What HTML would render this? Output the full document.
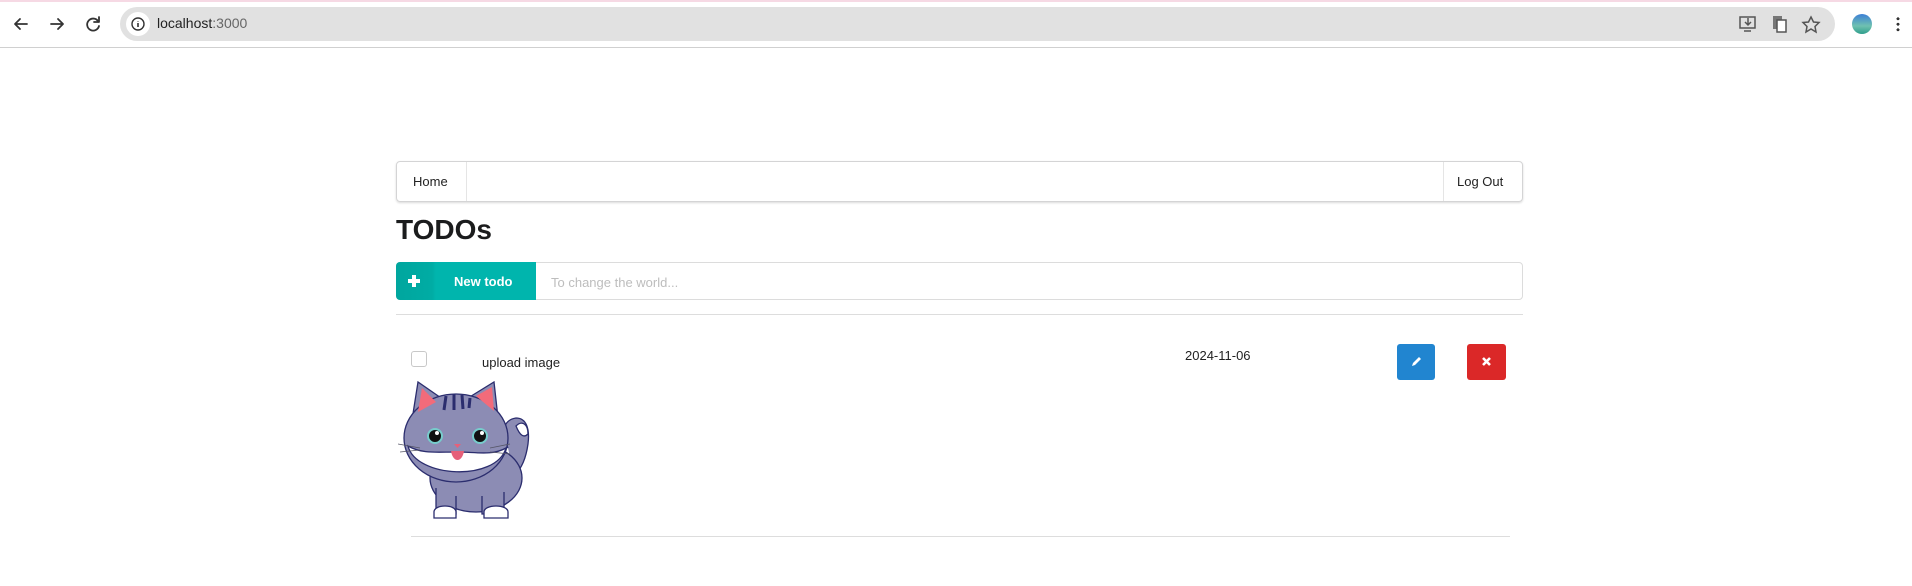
<!DOCTYPE html>
<html><head><style>
*{margin:0;padding:0;box-sizing:border-box}
body{width:1912px;height:586px;background:#fff;font-family:"Liberation Sans",sans-serif;position:relative;overflow:hidden;color:#222}
.a{position:absolute}
</style></head><body>
<div class="a" style="left:0;top:0;width:1912px;height:2px;background:#f6d9e4"></div>
<div class="a" style="left:0;top:47px;width:1912px;height:1px;background:#d0d0d0"></div>
<svg class="a" style="left:0;top:0" width="120" height="48">
<g stroke="#333" stroke-width="1.8" fill="none" stroke-linecap="round" stroke-linejoin="round">
<path d="M27 24H15M20 19l-5 5 5 5"/>
<path d="M51 24h12M58 19l5 5-5 5"/>
<path d="M98 21a6 6 0 1 0 1 5"/><path d="M99 17v5h-5"/>
</g></svg>
<div class="a" style="left:120px;top:7px;width:1715px;height:34px;background:#e1e1e1;border-radius:17px"></div>
<div class="a" style="left:126px;top:12px;width:24px;height:24px;background:#fff;border-radius:12px"></div>
<svg class="a" style="left:130px;top:16px" width="16" height="16"><circle cx="8" cy="8" r="6" fill="none" stroke="#333" stroke-width="1.4"/><path d="M8 7v4M8 5v.5" stroke="#333" stroke-width="1.6"/></svg>
<div class="a" style="left:157px;top:15px;font-size:14px;color:#222">localhost<span style="color:#666">:3000</span></div>
<svg class="a" style="left:1736px;top:12px" width="90" height="24" fill="none" stroke="#555" stroke-width="1.5">
<rect x="4" y="5" width="15" height="11"/><path d="M8 19h7M12 6v6M9 10l3 3 3-3"/>
<rect x="37" y="4" width="9" height="13" fill="#777" stroke="none"/><rect x="41" y="8" width="9" height="12" fill="#fff"/>
<path d="M75 5l2.5 5 5.5.5-4 4 1 5.5-5-3-5 3 1-5.5-4-4 5.5-.5z"/></svg>
<div class="a" style="left:1852px;top:14px;width:20px;height:20px;border-radius:10px;background:linear-gradient(#3d7fd6,#6fc1b0 60%,#2f9e8c)"></div>
<div class="a" style="left:1896px;top:16px;width:4px;height:16px;background:radial-gradient(circle,#333 1.4px,transparent 1.6px) 0 0/4px 5.5px"></div>

<div class="a" style="left:396px;top:161px;width:1127px;height:41px;border:1px solid #d4d4d5;border-radius:4px;box-shadow:0 1px 2px rgba(0,0,0,.15)"></div>
<div class="a" style="left:466px;top:162px;width:1px;height:39px;background:#e5e5e5"></div>
<div class="a" style="left:1443px;top:162px;width:1px;height:39px;background:#e5e5e5"></div>
<div class="a" style="left:413px;top:174px;font-size:13px">Home</div>
<div class="a" style="left:1457px;top:174px;font-size:13px">Log Out</div>
<div class="a" style="left:396px;top:214px;font-size:28px;font-weight:bold;color:#1b1c1d">TODOs</div>
<div class="a" style="left:396px;top:262px;width:1127px;height:38px;border:1px solid #dcdcdc;border-radius:4px"></div>
<div class="a" style="left:396px;top:262px;width:140px;height:38px;background:linear-gradient(90deg,#00a69e 0,#00aca4 36px,#00b5ad 40px);border-radius:4px 0 0 4px"></div>
<div class="a" style="left:408px;top:279px;width:12px;height:4px;background:#fff"></div>
<div class="a" style="left:412px;top:275px;width:4px;height:12px;background:#fff"></div>
<div class="a" style="left:454px;top:274px;font-size:13px;font-weight:bold;color:#fff">New todo</div>
<div class="a" style="left:551px;top:275px;font-size:13px;color:#bdbdbd">To change the world...</div>
<div class="a" style="left:396px;top:314px;width:1127px;height:1px;background:#ddd"></div>
<div class="a" style="left:411px;top:351px;width:16px;height:16px;border:1px solid #c8c8c8;border-radius:3px"></div>
<div class="a" style="left:482px;top:355px;font-size:13px">upload image</div>
<div class="a" style="left:1185px;top:348px;font-size:13px">2024-11-06</div>
<div class="a" style="left:1397px;top:344px;width:38px;height:36px;background:#2185d0;border-radius:3px"></div>
<svg class="a" style="left:1409px;top:355px" width="14" height="14"><path d="M3 11l1-3 6-6 2 2-6 6z" fill="#fff"/></svg>
<div class="a" style="left:1467px;top:344px;width:39px;height:36px;background:#db2828;border-radius:3px"></div>
<svg class="a" style="left:1480px;top:355px" width="13" height="13"><path d="M3 3l7 7M10 3l-7 7" stroke="#fff" stroke-width="2.6"/></svg>
<svg class="a" style="left:398px;top:378px" width="152" height="146" viewBox="0 0 152 146">
<g stroke="#2b2d6e" stroke-width="1.3">
<path d="M110 70c-8-12-6-28 8-30 10 0 14 10 12 26-2 14-6 24-14 32" fill="#8c8cb4"/>
<path d="M118 48c6-6 12-2 12 8-4 4-8 2-12-8z" fill="#fff"/>
<ellipse cx="78" cy="100" rx="46" ry="34" fill="#8c8cb4"/>
<path d="M38 110v26h20v-18M84 118v18h22v-22" fill="#8c8cb4"/>
<path d="M36 134c0-8 22-8 22 0v6H36zM86 134c0-8 24-8 24 0v6H86z" fill="#fff"/>
<path d="M14 42L20 4l26 18M70 20l26-16 4 36" fill="#8c8cb4"/>
<ellipse cx="58" cy="60" rx="52" ry="44" fill="#8c8cb4"/>
<path d="M10 68c8 32 88 36 98 2c-14 8-30 4-50 4s-34 2-48-6z" fill="#fff"/>
</g>
<path d="M20 34l4-24 14 14zM78 18l16-9 2 24z" fill="#f26b7a"/>
<circle cx="37" cy="58" r="7" fill="#111" stroke="#7cc" stroke-width="2"/><circle cx="82" cy="58" r="7" fill="#111" stroke="#7cc" stroke-width="2"/>
<circle cx="39" cy="55" r="2" fill="#fff"/><circle cx="84" cy="55" r="2" fill="#fff"/>
<path d="M56 66h7l-3.5 4z" fill="#e6607a"/><path d="M53 73c2 12 11 12 13 0z" fill="#e6607a"/>
<path d="M48 18l-2 14M56 16v16M64 17l1 14M72 20l-1 10" stroke="#2b2d6e" stroke-width="3"/>
<path d="M0 66l22 4M2 74l20-2M92 70l20-4M92 74l20 2" stroke="#556" stroke-width=".8"/>
</svg>
<div class="a" style="left:411px;top:536px;width:1099px;height:1px;background:#ddd"></div>
</body></html>
